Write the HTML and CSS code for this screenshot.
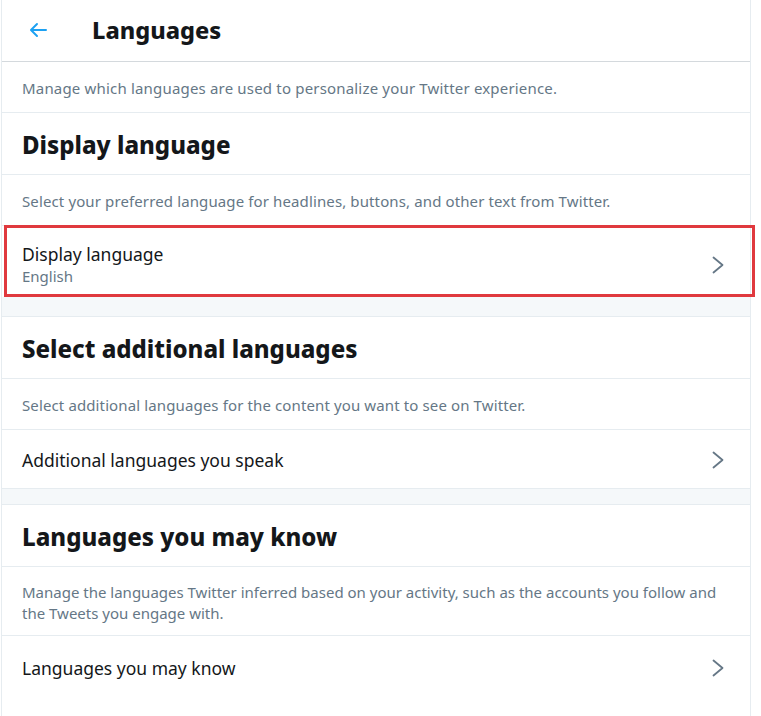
FILE: index.html
```html
<!DOCTYPE html>
<html lang="en">
<head>
<meta charset="utf-8">
<title>Languages</title>
<link rel="stylesheet" href="styles.css">
</head>
<body>
<div class="page">
  <header class="topbar">
    <button class="back" aria-label="Back">
      <svg viewBox="0 0 24 24" width="24" height="24"><path d="M20 11H7.414l4.293-4.293a1 1 0 0 0-1.414-1.414l-6 6a1 1 0 0 0 0 1.414l6 6a1 1 0 0 0 1.414-1.414L7.414 13H20a1 1 0 1 0 0-2z" fill="currentColor"/></svg>
    </button>
    <h1 class="title">Languages</h1>
  </header>

  <p class="desc first">Manage which languages are used to personalize your Twitter experience.</p>

  <h2 class="heading">Display language</h2>
  <p class="desc">Select your preferred language for headlines, buttons, and other text from Twitter.</p>
  <div class="row highlighted">
    <div class="row-text">
      <div class="row-label">Display language</div>
      <div class="row-sub">English</div>
    </div>
    <svg class="chev" viewBox="0 0 14 20" width="14" height="20"><path d="M2.5 2.5L11.5 10L2.5 17.5" fill="none" stroke="currentColor" stroke-width="1.8" stroke-linecap="round" stroke-linejoin="round"/></svg>
  </div>

  <div class="band"></div>

  <h2 class="heading">Select additional languages</h2>
  <p class="desc">Select additional languages for the content you want to see on Twitter.</p>
  <div class="row">
    <div class="row-text">
      <div class="row-label">Additional languages you speak</div>
    </div>
    <svg class="chev" viewBox="0 0 14 20" width="14" height="20"><path d="M2.5 2.5L11.5 10L2.5 17.5" fill="none" stroke="currentColor" stroke-width="1.8" stroke-linecap="round" stroke-linejoin="round"/></svg>
  </div>

  <div class="band short"></div>

  <h2 class="heading">Languages you may know</h2>
  <p class="desc condensed">Manage the languages Twitter inferred based on your activity, such as the accounts you follow and the Tweets you engage with.</p>
  <div class="row last">
    <div class="row-text">
      <div class="row-label">Languages you may know</div>
    </div>
    <svg class="chev" viewBox="0 0 14 20" width="14" height="20"><path d="M2.5 2.5L11.5 10L2.5 17.5" fill="none" stroke="currentColor" stroke-width="1.8" stroke-linecap="round" stroke-linejoin="round"/></svg>
  </div>
</div>
</body>
</html>
```

FILE: styles.css
```css
* { box-sizing: border-box; }
html, body { margin: 0; padding: 0; background: #fff; }
body {
  font-family: "Noto Sans", "Open Sans", sans-serif;
  color: #14171a;
  overflow: hidden;
}
.page {
  margin-left: 1px;
  width: 750px;
  border-left: 1px solid #e6ecf0;
  border-right: 1px solid #e6ecf0;
  min-height: 716px;
}
.topbar {
  height: 62px;
  display: flex;
  align-items: center;
  border-bottom: 1px solid #d4d9dd;
  padding-left: 24px;
  padding-bottom: 1px;
}
.back {
  border: 0;
  background: none;
  padding: 0;
  width: 24px;
  height: 24px;
  color: #1da1f2;
  display: flex;
  align-items: center;
  justify-content: center;
  margin-right: 42px;
}
.title {
  margin: 0;
  font-size: 23.5px;
  font-weight: 800;
}
.desc {
  margin: 0;
  padding: 16px 20px 14px;
  font-size: 15px;
  line-height: 20px;
  color: #657786;
  border-bottom: 1px solid #e6ecf0;
  letter-spacing: 0.12px;
}
.desc.first { letter-spacing: 0.18px; }
.desc.condensed {
  letter-spacing: 0;
  line-height: 21px;
  padding: 15px 16px 11px 20px;
}
.heading {
  margin: 0;
  height: 62px;
  display: flex;
  align-items: center;
  padding: 2px 20px 0;
  font-size: 24px;
  font-weight: 800;
  border-bottom: 1px solid #e6ecf0;
}
.row {
  display: flex;
  align-items: center;
  justify-content: space-between;
  padding: 2px 25px 0 20px;
  height: 59px;
  border-bottom: 1px solid #e6ecf0;
  position: relative;
}
.row.highlighted {
  height: 71px;
  padding-top: 6px;
  border-bottom: 0;
}
.row.highlighted::after {
  content: "";
  position: absolute;
  left: 2px;
  right: -5px;
  top: -1px;
  bottom: 0;
  border: 3px solid #e0393e;
  pointer-events: none;
}
.row.last { border-bottom: 0; height: 62px; }
.row-label {
  font-size: 17.5px;
  line-height: 24px;
}
.row-sub {
  font-size: 15px;
  line-height: 21px;
  color: #657786;
}
.chev { color: #657786; flex: none; }
.band {
  height: 20px;
  background: #f5f8fa;
  border-bottom: 1px solid #e6ecf0;
}
.band.short { height: 16px; }
```
